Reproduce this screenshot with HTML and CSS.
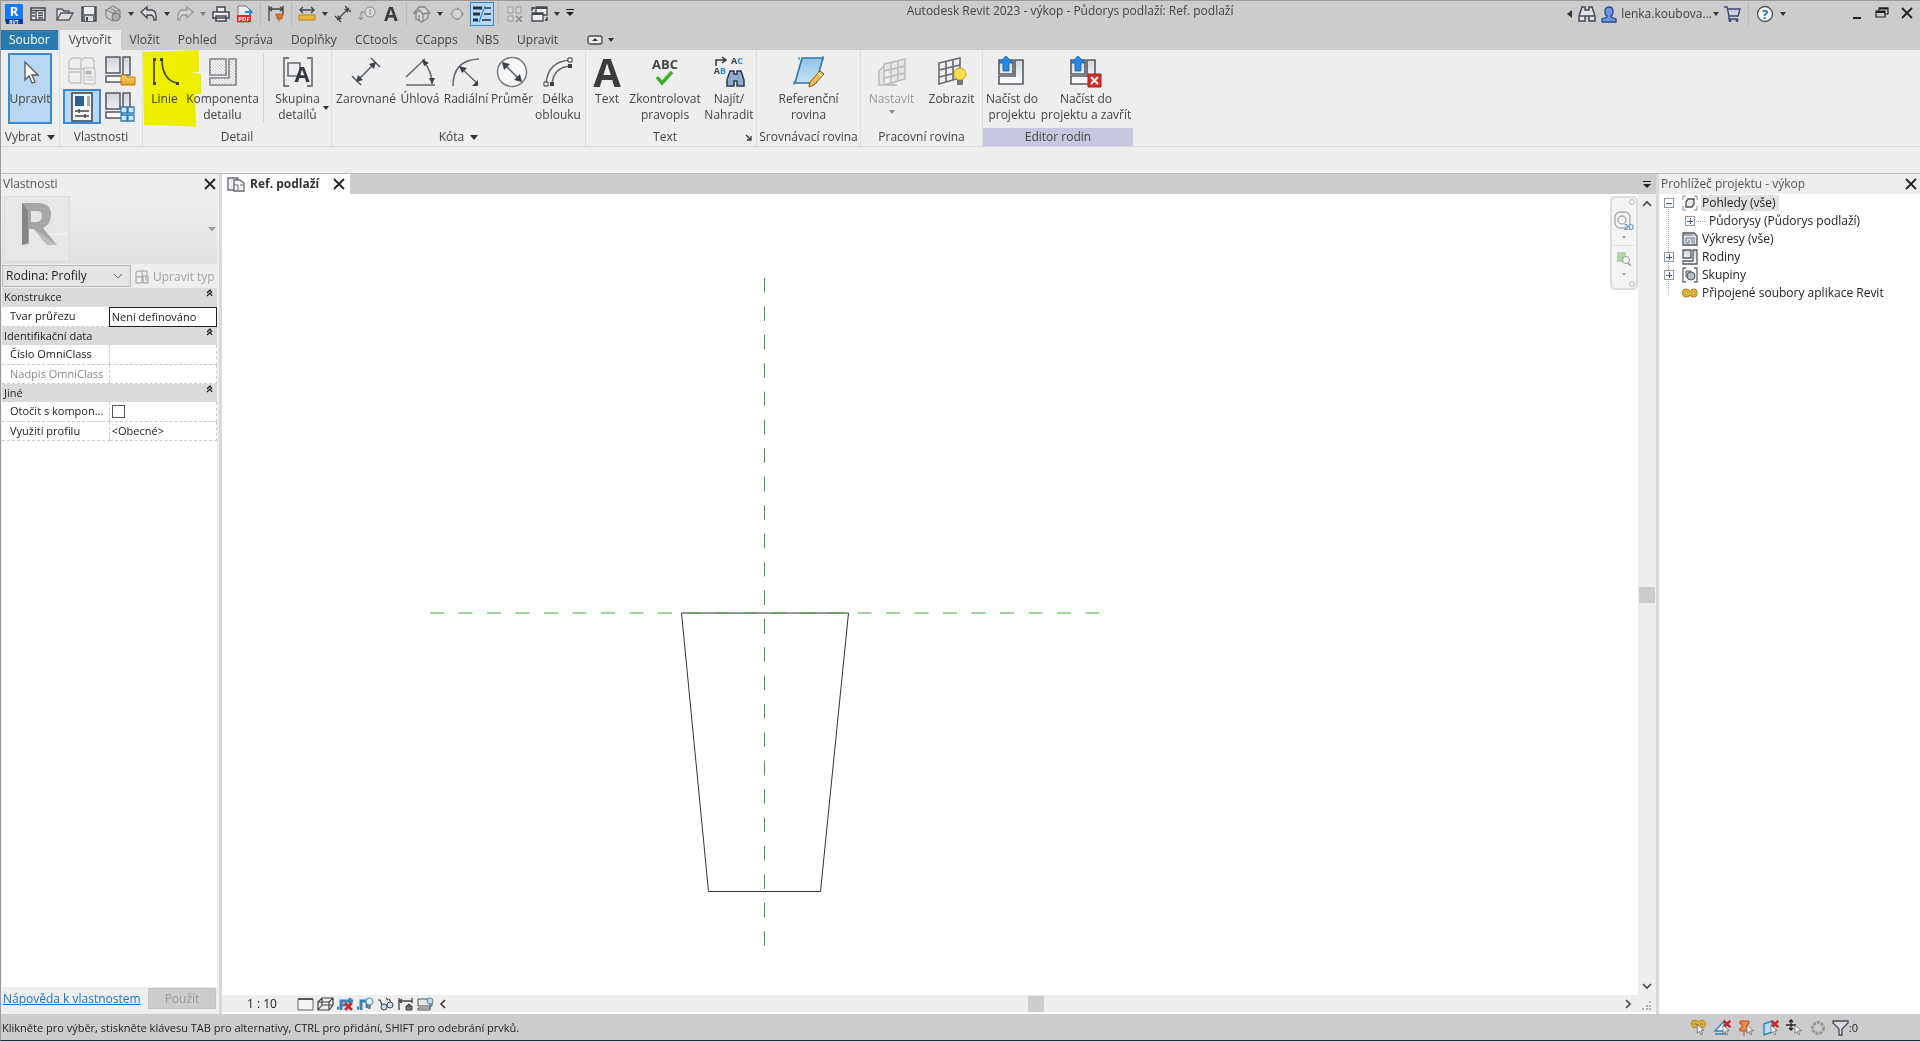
FILE: index.html
```html
<!DOCTYPE html>
<html lang="cs">
<head>
<meta charset="utf-8">
<title>Autodesk Revit 2023 - výkop - Půdorys podlaží: Ref. podlaží</title>
<link rel="stylesheet" href="styles.css">
</head>
<body>
<svg class="defs" aria-hidden="true">
  <defs>
    <linearGradient id="metal" x1="0" y1="0" x2="0" y2="1"><stop offset="0" stop-color="#d2d4d8"/><stop offset="1" stop-color="#fff"/></linearGradient>
    <linearGradient id="sky" x1="0" y1="0" x2="0" y2="1"><stop offset="0" stop-color="#8fc4e4"/><stop offset="1" stop-color="#c5e3f3"/></linearGradient>
    <linearGradient id="gold" x1="0" y1="0" x2="0" y2="1"><stop offset="0" stop-color="#fbd277"/><stop offset="1" stop-color="#e5a21d"/></linearGradient>
    <pattern id="hatch" width="3" height="3" patternUnits="userSpaceOnUse"><path d="M0 0L3 3" stroke="#bbb" stroke-width=".7"/></pattern>
    <symbol id="arrow" viewBox="0 0 16 16"><path d="M3 1v12l3-3 2 5 2-1-2-5h4z" fill="#fff" stroke="#555" stroke-width="1"/></symbol>
    <symbol id="binoc" viewBox="0 0 18 18"><path d="M4 2h3v3h4V2h3l3 9v5h-6v-5H7v5H1v-5zM2 11h5M11 11h5" fill="#dfe2e6" stroke="#444a52" stroke-width="1.5"/></symbol>
    <symbol id="family" viewBox="0 0 16 16"><path d="M1 1h8v8H1zM11 1h4v14H1v-3h10z" fill="url(#metal)" stroke="#555a62" stroke-width="1.3"/></symbol>
    <symbol id="link" viewBox="0 0 18 12"><path d="M5 3C1 3 1 9 5 9s5-6 8-6 4 6 0 6-5-6-8-6z" fill="none" stroke="#a67b13" stroke-width="4"/><path d="M5 3C1 3 1 9 5 9s5-6 8-6 4 6 0 6-5-6-8-6z" fill="none" stroke="#e5b22d" stroke-width="2.4"/></symbol>
    <symbol id="redx" viewBox="0 0 10 10"><path d="M1 1l8 8M9 1L1 9" stroke="#d02028" stroke-width="3"/></symbol>
  </defs>
</svg>

<div class="app">
  <header class="titlebar">
    <nav class="quick" aria-label="Rychlý přístup">
      <button class="qbtn" aria-label="Revit"><svg width="20" height="22" viewBox="0 0 20 22"><path d="M1 1h17l1 1v15H1z" fill="#1877f2"/><path d="M1 16h18v5H2z" fill="#0a3c9e"/><text x="10" y="13" class="logo-r">R</text><text x="10" y="21" class="logo-rvt">RVT</text></svg></button>
      <button class="qbtn" aria-label="Domů"><svg width="18" height="18" viewBox="0 0 18 18"><path d="M2 3h14v12H2z" fill="#e8e8e8" stroke="#444a52" stroke-width="1.5"/><path d="M2 5.500h14M7 5v10M9 8h5M9 10.500h5M9 13h5M3 8h3M3 11h3" stroke="#444a52" stroke-width="1.3"/></svg></button>
      <button class="qbtn open" aria-label="Otevřít"><svg width="18" height="18" viewBox="0 0 18 18"><path d="M1 15V4h5l2 2h5v3M1 15l4-7h12l-4 7z" fill="#ddd" stroke="#555b63" stroke-width="1.4"/></svg></button>
      <button class="qbtn" aria-label="Uložit"><svg width="18" height="18" viewBox="0 0 18 18"><path d="M2 2h14v14H2z" fill="#6d737b" stroke="#41474f" stroke-width="1.4"/><path d="M4 2h10v7H4z" fill="#eee"/><path d="M5 11h8v5H5z" fill="#ddd"/><path d="M6 12h2v4H6z" fill="#444"/></svg></button>
      <button class="qbtn" aria-label="Synchronizovat"><svg width="18" height="18" viewBox="0 0 18 18"><path d="M2 5l7-4 7 4v7l-7 4-7-4zM2 5l7 3 7-3M9 8v8M5 3l7 3" fill="#ccc" stroke="#888" stroke-width="1.2"/><circle cx="12" cy="12" r="4" fill="#aaa" stroke="#777"/></svg></button>
      <span class="caret"></span>
      <button class="qbtn" aria-label="Zpět"><svg width="18" height="16" viewBox="0 0 18 16"><path d="M1 6l6-5v3h4q6 0 5 10h-2q0-5-4-5H7v3z" fill="#ddd" stroke="#41474f" stroke-width="1.3"/></svg></button>
      <span class="caret"></span>
      <button class="qbtn dim" aria-label="Znovu"><svg width="18" height="16" viewBox="0 0 18 16"><path d="M17 6l-6-5v3H7q-6 0-5 10h2q0-5 4-5h3v3z" fill="#ddd" stroke="#666" stroke-width="1.3"/></svg></button>
      <span class="caret dim"></span>
      <button class="qbtn" aria-label="Tisk"><svg width="18" height="18" viewBox="0 0 18 18"><path d="M5 7V2h8v5M1 7h16v6H1zM4 11h10v5H4z" fill="#eee" stroke="#41474f" stroke-width="1.5"/></svg></button>
      <button class="qbtn" aria-label="PDF"><svg width="18" height="18" viewBox="0 0 18 18"><path d="M2 1h8l4 4v12H2z" fill="#eee" stroke="#777"/><path d="M1 10h14v7H1z" fill="#d62a1e"/><path d="M9 6h4V3l4 4-4 4V8H9z" fill="#2788d8"/><text x="8" y="16" class="pdf">PDF</text></svg></button>
      <i class="qsep"></i>
      <button class="qbtn" aria-label="Zarovnaná kóta"><svg width="18" height="18" viewBox="0 0 18 18"><path d="M2 1v15M16 1v8M2 4h14M5 2L2 4l3 2M13 2l3 2-3 2" fill="none" stroke="#41474f" stroke-width="1.3"/><path d="M9 9h7v2h-1v3h-5v-3H9zM12 14v3" fill="#e07828" stroke="#b5551c" stroke-width=".8"/></svg></button>
      <i class="qsep"></i>
      <button class="qbtn" aria-label="Měřit"><svg width="18" height="18" viewBox="0 0 18 18"><path d="M2 5h14M5 2L2 5l3 3M13 2l3 3-3 3" fill="none" stroke="#41474f" stroke-width="1.4"/><path d="M1 10h16v5H1z" fill="#edb339" stroke="#b98211"/></svg></button>
      <span class="caret"></span>
      <button class="qbtn" aria-label="Kóta"><svg width="18" height="18" viewBox="0 0 18 18"><path d="M3 15L15 3M1 11l6 6M11 1l6 6" stroke="#41474f" stroke-width="1.2"/><path d="M3 15l1-5 4 4zM15 3l-1 5-4-4z" fill="#41474f"/></svg></button>
      <button class="qbtn dim" aria-label="Popisek"><svg width="18" height="18" viewBox="0 0 18 18"><circle cx="12" cy="7" r="5" fill="#eee" stroke="#444"/><path d="M12 4v6M7 7H3v7M1 12l2 3 2-3" fill="none" stroke="#444"/></svg></button>
      <button class="qbtn" aria-label="Text"><span class="big-a small">A</span></button>
      <i class="qsep"></i>
      <button class="qbtn dim" aria-label="3D pohled"><svg width="18" height="18" viewBox="0 0 18 18"><path d="M1 8l5-6h6l5 6h-2v5l-6 4-6-3V8zM3 8l3-3 4 4v8M6 10v5M10 9l5-1" fill="#ddd" stroke="#444" stroke-width="1.3"/></svg></button>
      <span class="caret"></span>
      <button class="qbtn dim" aria-label="Řez"><svg width="18" height="18" viewBox="0 0 18 18"><path d="M8 2l7 7-7 7z" fill="#555"/><circle cx="8" cy="9" r="5" fill="#ddd" stroke="#444"/><path d="M1 9h2" stroke="#555"/></svg></button>
      <button class="qbtn on" aria-label="Tenké čáry"><svg width="20" height="18" viewBox="0 0 20 18"><path d="M1 3h9M1 9h7M1 15h5" stroke="#27303c" stroke-width="3"/><path d="M13 3h6M12 9h7M10 15h9" stroke="#27303c" stroke-width="1.5"/><path d="M13 1L7 17" stroke="#3d8fe0" stroke-width="1.3"/></svg></button>
      <i class="qsep wide"></i>
      <button class="qbtn dim" aria-label="Zavřít neaktivní"><svg width="18" height="18" viewBox="0 0 18 18"><path d="M2 2h5v6H2zM10 2h5v6h-5zM2 11h5v5H2z" fill="#ddd" stroke="#666"/><path d="M10 11l6 6M16 11l-6 6" stroke="#444" stroke-width="1.6"/></svg></button>
      <button class="qbtn" aria-label="Přepnout okna"><svg width="18" height="18" viewBox="0 0 18 18"><path d="M6 2h11v8H6z" fill="#eee" stroke="#444a52" stroke-width="1.3"/><path d="M6 3h11" stroke="#444a52" stroke-width="2"/><path d="M2 8h11v8H2z" fill="#eee" stroke="#444a52" stroke-width="1.300"/><path d="M2 9h11" stroke="#444a52" stroke-width="2"/><path d="M2 6V3h3M17 12v3h-2" fill="none" stroke="#333" stroke-width="1.300"/></svg></button>
      <span class="caret"></span>
      <button class="customize" aria-label="Přizpůsobit"><i></i></button>
    </nav>
    <h1 class="title">Autodesk Revit 2023 - výkop - Půdorys podlaží: Ref. podlaží</h1>
    <div class="account">
      <span class="caret left"></span>
      <button class="qbtn" aria-label="Hledat"><svg width="18" height="18"><use href="#binoc"/></svg></button>
      <button class="user"><svg width="16" height="17" viewBox="0 0 16 17"><path d="M8 1c6 0 4 8 2 9v1l5 2v3H1v-3l5-2v-1C4 9 2 1 8 1z" fill="#6c94e8" stroke="#2b4a8e" stroke-width="1.3"/></svg><span>lenka.koubova...</span><span class="caret"></span></button>
      <button class="qbtn" aria-label="Košík"><svg width="18" height="18" viewBox="0 0 18 18"><path d="M1 2h3l2 9h9l2-7H5M6 11v3h9" fill="#cfd3df" stroke="#3c4770" stroke-width="1.4"/><circle cx="7" cy="15.500" r="1.500" fill="#3c4770"/><circle cx="14" cy="15.500" r="1.500" fill="#3c4770"/></svg></button>
      <i class="qsep wide"></i>
      <button class="qbtn" aria-label="Nápověda"><svg width="18" height="18" viewBox="0 0 18 18"><circle cx="9" cy="9" r="7.500" fill="#f4f4f4" stroke="#4c535c" stroke-width="1.3"/><text x="9" y="14" class="qmark">?</text></svg></button>
      <span class="caret"></span>
    </div>
    <div class="window-buttons">
      <button aria-label="Minimalizovat"><svg width="12" height="14" viewBox="0 0 12 14"><path d="M2 12h8" stroke="#222" stroke-width="2"/></svg></button>
      <button aria-label="Obnovit"><svg width="14" height="14" viewBox="0 0 14 14"><path d="M4 5V2h9v6h-3M1 5h9v6H1z" fill="none" stroke="#222" stroke-width="1.2"/><path d="M4 2.500h9M1 6h9" stroke="#222" stroke-width="2"/></svg></button>
      <button aria-label="Zavřít"><svg width="12" height="12" viewBox="0 0 12 12"><path d="M1 1l10 10M11 1L1 11" stroke="#222" stroke-width="1.800"/></svg></button>
    </div>
  </header>

  <nav class="tabs">
    <button class="file">Soubor</button>
    <button class="active">Vytvořit</button>
    <button>Vložit</button><button>Pohled</button><button>Správa</button><button>Doplňky</button><button>CCtools</button><button>CCapps</button><button>NBS</button><button>Upravit</button>
    <button class="minimize" aria-label="Minimalizovat pás karet"><svg width="16" height="10" viewBox="0 0 16 10"><rect x="1" y="1" width="14" height="8" rx="2" fill="#eee" stroke="#444a52" stroke-width="1.3"/><path d="M8 3l3 3H5z" fill="#333"/></svg><span class="caret"></span></button>
  </nav>

  <section class="ribbon">
    <div class="panel p-select">
      <div class="tools"><button class="tool selected"><svg width="30" height="30" viewBox="0 0 30 30"><path d="M10 5v18l4-4 3 7 3-1-3-7h6z" fill="#fff" stroke="#555" stroke-width="1.300"/></svg><span>Upravit</span></button></div>
      <h2>Vybrat<i class="tri"></i></h2>
    </div>
    <div class="panel p-props">
      <div class="tools mini">
        <button aria-label="Vlastnosti typu" class="dim"><svg width="30" height="30" viewBox="0 0 30 30"><path d="M2 5l3-3h8l2 2 2-2h8l2 3v8H2zM2 16h12v11H4l-2-2zM14 3v24" fill="#eee" stroke="#999" stroke-width="1.400"/><path d="M17 12h11v16H17z" fill="#eee" stroke="#888"/><path d="M19 15h5v3h-5zM19 21h7M19 24h7" fill="#888" stroke="#888"/></svg></button>
        <button aria-label="Kategorie a parametry rodiny"><svg width="32" height="32" viewBox="0 0 32 32"><path d="M2 2h14v16H2zM19 2h7v18h-7zM2 21h16v6H2z" fill="url(#metal)" stroke="#555a62" stroke-width="1.500"/><path d="M17 20h5l1 2h8v8H17z" fill="url(#gold)" stroke="#b97c0b"/></svg></button>
        <button aria-label="Vlastnosti" class="selected"><svg width="24" height="32" viewBox="0 0 24 32"><rect x="2" y="2" width="20" height="28" fill="#f4f4f4" stroke="#444a52" stroke-width="1.600"/><path d="M5 5h9v10H5z" fill="#2d5f93"/><path d="M17 5h3v10h-3z" fill="#aaa"/><path d="M5 20h14M5 25h14M9 18v4M15 23v4" stroke="#444a52" stroke-width="1.500"/></svg></button>
        <button aria-label="Typy rodiny"><svg width="32" height="32" viewBox="0 0 32 32"><path d="M2 2h14v16H2zM19 2h7v18h-7zM2 21h16v6H2z" fill="url(#metal)" stroke="#555a62" stroke-width="1.500"/><path d="M17 16h6v6h-6zM24 16h6v6h-6zM17 24h6v6h-6zM24 24h6v6h-6z" fill="#cfe6f8" stroke="#2c7dba" stroke-width="1.300"/></svg></button>
      </div>
      <h2>Vlastnosti</h2>
    </div>
    <div class="panel p-detail">
      <div class="tools">
        <button class="tool w40"><svg width="30" height="30" viewBox="0 0 30 30"><path d="M4 3v24M12 3c0 10 4 22 16 23" fill="none" stroke="#3d4100" stroke-width="1.600"/><path d="M3 1h3v3H3zM3 25h3v3H3zM10 1h3v3h-3zM26 25h3v3h-3z" fill="#3d4100"/></svg><span>Linie</span></button>
        <button class="tool w76"><svg width="30" height="30" viewBox="0 0 30 30"><path d="M2 2h16v16H2zM21 2h7v26H2v-7h19z" fill="#f4f4f4" stroke="#777b80" stroke-width="1.600"/><path d="M2 2h16v16H2zM21 2h7v26H2v-7h19z" fill="url(#hatch)"/></svg><span>Komponenta<br>detailu</span></button>
        <i class="divider"></i>
        <button class="tool w64 menu"><svg width="32" height="30" viewBox="0 0 32 30"><path d="M7 1H2v28h5M25 1h5v28h-5" fill="none" stroke="#777b80" stroke-width="1.800"/><path d="M6 6h12v13H6z" fill="none" stroke="#666a70" stroke-width="1.600"/><text x="20" y="25" class="glyph-a">A</text></svg><span>Skupina<br>detailů</span><i class="caret"></i></button>
        <svg class="marker" width="58" height="78" viewBox="0 0 58 78" aria-hidden="true"><path d="M0 2L56 0V22H48L58 24V44H52L53 77L40 76L1 75z" fill="#ff0"/></svg>
      </div>
      <h2>Detail</h2>
    </div>
    <div class="panel p-dim">
      <div class="tools">
        <button class="tool w64"><svg width="30" height="30" viewBox="0 0 30 30"><path d="M6 24L24 6M1 19l9 9M20 1l9 9" stroke="#555b63" stroke-width="1.500"/><path d="M5 25l2-7 5 5zM25 5l-2 7-5-5z" fill="#3c424a"/></svg><span>Zarovnané</span></button>
        <button class="tool w44"><svg width="30" height="30" viewBox="0 0 30 30"><path d="M1 28h29M1 20L20 2M18 4q9 10 9 23" fill="none" stroke="#666a70" stroke-width="1.600"/><path d="M17 2l7 4-5 3zM24 21h6l-3 6z" fill="#3c424a"/></svg><span>Úhlová</span></button>
        <button class="tool w48"><svg width="30" height="30" viewBox="0 0 30 30"><path d="M2 29Q2 3 28 2M9 10l18 17" fill="none" stroke="#666a70" stroke-width="1.600"/><path d="M8 9l8 2-5 5zM27 23v6h-6z" fill="#3c424a"/></svg><span>Radiální</span></button>
        <button class="tool w44"><svg width="32" height="32" viewBox="0 0 32 32"><circle cx="16" cy="16" r="14.500" fill="#f7f7f7" stroke="#777b80" stroke-width="1.500"/><path d="M7 7l18 18" stroke="#555b63" stroke-width="1.500"/><path d="M6 6l8 2-6 6zM26 26l-2-8-6 6z" fill="#3c424a"/></svg><span>Průměr</span></button>
        <button class="tool w48"><svg width="30" height="30" viewBox="0 0 30 30"><path d="M3 28Q4 4 28 3M9 28Q10 10 28 9" fill="none" stroke="#666a70" stroke-width="1.600"/><path d="M1 25h4v4H1zM25 1h4v4h-4z" fill="#fff" stroke="#333"/><path d="M7 25h4v4H7zM25 7h4v4h-4z" fill="#3c424a"/></svg><span>Délka<br>oblouku</span></button>
      </div>
      <h2>Kóta<i class="tri"></i></h2>
    </div>
    <div class="panel p-text">
      <div class="tools">
        <button class="tool w40"><span class="big-a">A</span><span>Text</span></button>
        <button class="tool w76"><svg width="30" height="30" viewBox="0 0 30 30"><text x="15" y="12" class="abc">ABC</text><path d="M7 20l5 6 10-11" fill="none" stroke="#43b02a" stroke-width="3.500"/></svg><span>Zkontrolovat<br>pravopis</span></button>
        <button class="tool w52"><svg width="32" height="32" viewBox="0 0 32 32"><path d="M3 10V4h10M9 1l4 3-4 3" fill="none" stroke="#333" stroke-width="1.500"/><text x="24" y="8" class="tiny">A<tspan fill="#2e8be6">C</tspan></text><text x="7" y="18" class="tiny">A<tspan fill="#2e8be6">B</tspan></text><path d="M17 15h4v3h3v-3h4l3 9v6h-7v-5h-3v5h-7v-6z" fill="#8fabd0" stroke="#28374e" stroke-width="1.500"/></svg><span>Najít/<br>Nahradit</span></button>
      </div>
      <h2>Text<svg class="launcher" width="7" height="7" viewBox="0 0 7 7"><path d="M1 1l4 4M6 2v4H2" fill="none" stroke="#333" stroke-width="1.300"/></svg></h2>
    </div>
    <div class="panel p-ref">
      <div class="tools"><button class="tool w64"><svg width="32" height="32" viewBox="0 0 32 32"><path d="M9 2h21l-7 25H2z" fill="url(#sky)" stroke="#2e78ac" stroke-width="1.600"/><path d="M6 1v3M30 0v4M1 25v4" stroke="#2e78ac"/><path d="M27 15l4 3-10 11-5 2 1-5z" fill="#f0bd53" stroke="#7e5920"/><path d="M25 17l4 3" stroke="#fff"/></svg><span>Referenční<br>rovina</span></button></div>
      <h2>Srovnávací rovina</h2>
    </div>
    <div class="panel p-work">
      <div class="tools">
        <button class="tool w60 dim" disabled><svg width="30" height="30" viewBox="0 0 30 30"><path d="M7 7l21-5v20L7 28zM7 14l21-5M7 21l21-5M14 5v21M21 4v20M7 9L2 14v14h18" fill="#ddd" stroke="#888" stroke-width="1.400"/></svg><span>Nastavit</span><i class="caret"></i></button>
        <button class="tool w60"><svg width="30" height="32" viewBox="0 0 30 32"><path d="M2 7l21-5v20L2 28zM2 14l21-5M2 21l21-5M9 5v21M16 4v20" fill="#eee" stroke="#666a70" stroke-width="1.600"/><circle cx="23" cy="18" r="6" fill="#ffe04a" stroke="#c79b18"/><path d="M20 24h6v5h-6z" fill="#777"/></svg><span>Zobrazit</span></button>
      </div>
      <h2>Pracovní rovina</h2>
    </div>
    <div class="panel p-editor">
      <div class="tools">
        <button class="tool w56"><svg width="30" height="32" viewBox="0 0 30 32"><path d="M2 4h14v14H2zM18 4h8v24H2v-8h16z" fill="url(#metal)" stroke="#555a62" stroke-width="1.600"/><path d="M9 0l7 7h-4v8H6V7H2z" fill="#2588e8" stroke="#145fa8" stroke-width=".8"/></svg><span>Načíst do<br>projektu</span></button>
        <button class="tool w92"><svg width="34" height="32" viewBox="0 0 34 32"><path d="M2 4h14v14H2zM18 4h8v24H2v-8h16z" fill="url(#metal)" stroke="#555a62" stroke-width="1.600"/><path d="M9 0l7 7h-4v8H6V7H2z" fill="#2588e8" stroke="#145fa8" stroke-width=".8"/><path d="M19 18h13v13H19z" fill="#d32f2f" stroke="#a51e1e"/><path d="M22 21l7 7M29 21l-7 7" stroke="#fff" stroke-width="1.800"/></svg><span>Načíst do<br>projektu a zavřít</span></button>
      </div>
      <h2>Editor rodin</h2>
    </div>
  </section>
  <div class="options-bar"></div>

  <main class="workspace">
    <aside class="properties">
      <div class="dock-head"><h2>Vlastnosti</h2><button aria-label="Zavřít vlastnosti"><svg width="12" height="12" viewBox="0 0 12 12"><path d="M1 1l10 10M11 1L1 11" stroke="#222" stroke-width="1.800"/></svg></button></div>
      <div class="type-selector">
        <svg width="66" height="66" viewBox="0 0 66 66"><rect x=".5" y=".5" width="65" height="65" fill="#e7e7e7" stroke="#dcdcdc"/><path d="M3 39h59v-3l-20 3z" fill="#efefef"/><path d="M18 7h17q13 1 12 13-1 9-8 12l14 17H43L30 33h-5v15l-7 1z" fill="#a5a5a5"/><path d="M18 7l6 8v31l-6 3z" fill="#858585"/><path d="M27 15h6q5 0 5 5t-5 6h-6z" fill="#e4e4e4"/><path d="M30 33l23 16H43z" fill="#bcbcbc"/></svg>
        <i class="caret"></i>
      </div>
      <div class="filter-row">
        <span class="combo"><select aria-label="Filtr vlastností"><option>Rodina: Profily</option></select><svg width="10" height="6" viewBox="0 0 10 6"><path d="M1 1l4 4 4-4" fill="none" stroke="#666"/></svg></span>
        <button class="edit-type" disabled><svg width="14" height="14" viewBox="0 0 14 14"><path d="M1 2l2-1h4v12H1zM7 1h5v4M1 7h6M8 6h5v7H8zM10 8h2M10 10h2" fill="none" stroke="#999"/></svg>Upravit typ</button>
      </div>
      <div class="grid-area">
      <table class="props">
        <tbody>
          <tr class="group"><th colspan="2"><button>Konstrukce<svg width="7" height="8" viewBox="0 0 7 8"><path d="M1 4l3-3 2 3M1 7l3-3 2 3" fill="none" stroke="#222" stroke-width="1.300"/></svg></button></th></tr>
          <tr><th><label for="shape">Tvar průřezu</label></th><td class="focus"><input id="shape" value="Není definováno"></td></tr>
          <tr class="group"><th colspan="2"><button>Identifikační data<svg width="7" height="8" viewBox="0 0 7 8"><path d="M1 4l3-3 2 3M1 7l3-3 2 3" fill="none" stroke="#222" stroke-width="1.300"/></svg></button></th></tr>
          <tr><th><label for="omni">Číslo OmniClass</label></th><td><input id="omni"></td></tr>
          <tr class="off"><th><label for="omni-title">Nadpis OmniClass</label></th><td><input id="omni-title" disabled></td></tr>
          <tr class="group"><th colspan="2"><button>Jiné<svg width="7" height="8" viewBox="0 0 7 8"><path d="M1 4l3-3 2 3M1 7l3-3 2 3" fill="none" stroke="#222" stroke-width="1.300"/></svg></button></th></tr>
          <tr><th><label for="rotate">Otočit s kompon...</label></th><td><input type="checkbox" id="rotate"></td></tr>
          <tr><th><label for="usage">Využití profilu</label></th><td><input id="usage" value="&lt;Obecné&gt;"></td></tr>
        </tbody>
      </table>
      </div>
      <div class="props-foot"><a href="#help">Nápověda k vlastnostem</a><button disabled>Použít</button></div>
    </aside>

    <section class="view">
      <div class="view-tabs">
        <div class="view-tab"><svg width="18" height="15" viewBox="0 0 18 15"><path d="M1 1h10v12H1z" fill="#eee" stroke="#666a70" stroke-width="1.300"/><path d="M7 3h6l4 3v8H7z" fill="#f4f4f4" stroke="#666a70" stroke-width="1.300"/><path d="M7 8h4M13 8h3M11 8v5" stroke="#666a70"/></svg><span>Ref. podlaží</span><button aria-label="Zavřít pohled"><svg width="12" height="12" viewBox="0 0 12 12"><path d="M1 1l10 10M11 1L1 11" stroke="#222" stroke-width="1.800"/></svg></button></div>
        <button class="customize" aria-label="Seznam pohledů"><i></i></button>
      </div>
      <div class="canvas-row">
        <div class="canvas">
          <svg class="drawing" aria-label="Profil výkopu">
            <path d="M459.500 419H626.500L598.500 697.500H486.500z" fill="none" stroke="#333"/>
            <path d="M208 419H879" stroke="#3fa83f" stroke-dasharray="14 14.500"/>
            <path d="M542.500 84V754" stroke="#35a035" stroke-dasharray="14.500 13.900"/>
          </svg>
          <div class="navbar">
            <i class="dot"></i>
            <svg width="20" height="20" viewBox="0 0 20 20"><rect x="1" y="1" width="15" height="16" rx="5" fill="#f4f4f4" stroke="#aaa" stroke-width="1.300"/><circle cx="8" cy="9" r="4" fill="none" stroke="#aaa" stroke-width="1.300"/><text x="15" y="19" class="two-d">2D</text></svg>
            <i class="caret"></i>
            <i class="rule"></i>
            <svg width="16" height="16" viewBox="0 0 16 16"><path d="M1 1h9v10H1z" fill="#b3d4a5"/><circle cx="10" cy="9" r="3.500" fill="#f4f4f4" stroke="#999"/><path d="M12 12l3 3" stroke="#999" stroke-width="1.500"/></svg>
            <i class="caret"></i>
            <i class="dot end"></i>
          </div>
        </div>
        <div class="vscroll"><svg width="10" height="6" viewBox="0 0 10 6"><path d="M1 5l4-4 4 4" fill="none" stroke="#444" stroke-width="1.600"/></svg><i class="thumb"></i><svg width="10" height="6" viewBox="0 0 10 6"><path d="M1 1l4 4 4-4" fill="none" stroke="#444" stroke-width="1.600"/></svg></div>
      </div>
      <div class="view-bar">
        <button class="scale">1 : 10</button>
        <div class="view-icons">
          <button aria-label="Úroveň detailu"><svg width="17" height="14" viewBox="0 0 17 14"><path d="M1 2h15v11H1z" fill="#f4f4f8" stroke="#666"/><path d="M1 2h15" stroke="#555" stroke-width="2"/></svg></button>
          <button aria-label="Vizuální styl"><svg width="17" height="14" viewBox="0 0 17 14"><path d="M1 5l4-4h11v7l-4 5H1zM1 5h11v8M12 5l4-4M5 1v7h11M5 8l-4 5" fill="none" stroke="#444" stroke-width="1.200"/></svg></button>
          <button aria-label="Oříznout pohled"><svg width="17" height="14" viewBox="0 0 17 14"><path d="M0 11h2M4 13V4h9v3M13 1v3h3M4 8h5" fill="none" stroke="#3980b8" stroke-width="3"/><path d="M8 6l7 7M15 6l-7 7" stroke="#c92828" stroke-width="2.500"/></svg></button>
          <button aria-label="Zobrazit oblast oříznutí"><svg width="17" height="14" viewBox="0 0 17 14"><path d="M0 11h2M4 13V4h6v7" fill="none" stroke="#3980b8" stroke-width="3"/><circle cx="12.500" cy="4.500" r="3.500" fill="#ddefff" stroke="#58a"/><path d="M12.500 8v4" stroke="#777" stroke-width="2.500"/></svg></button>
          <button aria-label="Dočasně skrýt"><svg width="17" height="14" viewBox="0 0 17 14"><path d="M1 3h2l3 7M9 1l2 2M12 2l3 5" fill="none" stroke="#444" stroke-width="1.200"/><ellipse cx="7" cy="10" rx="3" ry="3" fill="#cde" stroke="#444"/><ellipse cx="13" cy="8" rx="3" ry="3" fill="#cde" stroke="#444"/></svg></button>
          <button aria-label="Odkrýt vazby"><svg width="17" height="14" viewBox="0 0 17 14"><path d="M2 1v12M15 1v5M2 4h13M5 2L2 4l3 2" fill="none" stroke="#444" stroke-width="1.300"/><path d="M9 9h6v4H9zM10 9q2-4 4 0" fill="#777" stroke="#444"/></svg></button>
          <button aria-label="Náhled"><svg width="17" height="14" viewBox="0 0 17 14"><path d="M1 2h14v7H1zM1 11h12v2H1z" fill="#e5e5e5" stroke="#555"/><circle cx="13" cy="4" r="3" fill="#bcdcff" stroke="#58a"/><path d="M13 7v6" stroke="#68a" stroke-width="2"/></svg></button>
          <svg class="more" width="6" height="10" viewBox="0 0 6 10"><path d="M5 1L1 5l4 4" fill="none" stroke="#333" stroke-width="1.500"/></svg>
        </div>
        <div class="hscroll"><i class="thumb"></i><svg width="6" height="10" viewBox="0 0 6 10"><path d="M1 1l4 4-4 4" fill="none" stroke="#444" stroke-width="1.600"/></svg></div>
        <svg class="grip" width="10" height="10" viewBox="0 0 10 10"><path d="M7 0h2v2H7zM4 4h2v2H4zM7 4h2v2H7zM0 7h2v2H0zM4 7h2v2H4zM7 7h2v2H7z" fill="#b5b5b5"/></svg>
      </div>
    </section>

    <aside class="browser">
      <div class="dock-head"><h2>Prohlížeč projektu - výkop</h2><button aria-label="Zavřít prohlížeč"><svg width="12" height="12" viewBox="0 0 12 12"><path d="M1 1l10 10M11 1L1 11" stroke="#222" stroke-width="1.800"/></svg></button></div>
      <ul class="tree">
        <li><button class="exp minus" aria-label="Sbalit"></button><svg width="16" height="16" viewBox="0 0 16 16"><path d="M4 1H1v4M12 1h3v4M4 15H1v-4M12 15h3v-4" fill="none" stroke="#888"/><path d="M4 7l2-3h6v5l-2 3H4z" fill="#e7ebf0" stroke="#555" stroke-width="1.400"/></svg><span class="sel">Pohledy (vše)</span></li>
        <li class="child"><button class="exp" aria-label="Rozbalit"></button><i class="dots"></i><span>Půdorysy (Půdorys podlaží)</span></li>
        <li class="leaf"><svg width="16" height="14" viewBox="0 0 16 14"><path d="M1 1h11l3 3v9H1z" fill="#dde2e8" stroke="#555" stroke-width="1.300"/><path d="M1 3h10M4 6h6v5M4 6v5h3V8M12 5v7" fill="none" stroke="#6b7a8c"/></svg><span>Výkresy (vše)</span></li>
        <li><button class="exp" aria-label="Rozbalit"></button><svg width="16" height="16"><use href="#family"/></svg><span>Rodiny</span></li>
        <li><button class="exp" aria-label="Rozbalit"></button><svg width="16" height="16" viewBox="0 0 16 16"><path d="M4 1H1v14h3M12 1h3v14h-3" fill="none" stroke="#666" stroke-width="1.300"/><path d="M4 4h5v6H4z" fill="#ccd" stroke="#555"/><circle cx="9" cy="9" r="4" fill="#b5bfcc" stroke="#555"/></svg><span>Skupiny</span></li>
        <li class="leaf"><svg width="16" height="12"><use href="#link"/></svg><span>Připojené soubory aplikace Revit</span></li>
      </ul>
    </aside>
  </main>

  <footer class="status">
    <p>Klikněte pro výběr, stiskněte klávesu TAB pro alternativy, CTRL pro přidání, SHIFT pro odebrání prvků.</p>
    <div class="status-icons">
      <button aria-label="Vybrat vazby"><svg width="18" height="18" viewBox="0 0 18 18"><use href="#link" width="17" height="10"/><use href="#arrow" x="5" y="4" width="12" height="13"/></svg></button>
      <button aria-label="Vybrat podložené"><svg width="18" height="18" viewBox="0 0 18 18"><path d="M1 12l9-10v10zM1 15h12" fill="#eef6ff" stroke="#3980b8" stroke-width="1.400"/><use href="#redx" x="9" y="1" width="8" height="8"/><use href="#arrow" x="7" y="5" width="11" height="12"/></svg></button>
      <button aria-label="Vybrat připnuté"><svg width="18" height="18" viewBox="0 0 18 18"><path d="M2 2h9v3H9v4h2v3H2V9h2V5H2zM6 12v5" fill="#f08a4b" stroke="#b84a18"/><use href="#arrow" x="7" y="5" width="11" height="12"/></svg></button>
      <button aria-label="Vybrat podle plochy"><svg width="18" height="18" viewBox="0 0 18 18"><path d="M2 5l8-3v11l-8 3z" fill="#b8dcf0" stroke="#3980b8" stroke-width="1.400"/><use href="#redx" x="9" y="1" width="8" height="8"/><use href="#arrow" x="7" y="5" width="11" height="12"/></svg></button>
      <button aria-label="Přetáhnout prvky"><svg width="18" height="18" viewBox="0 0 18 18"><path d="M5 1v10M0 6h10M3 3l2-2 2 2M3 9l2 2 2-2" fill="none" stroke="#222" stroke-width="1.300"/><use href="#arrow" x="7" y="5" width="11" height="12"/></svg></button>
      <button aria-label="Procesy"><svg width="16" height="16" viewBox="0 0 16 16"><circle cx="8" cy="8" r="5.500" fill="none" stroke="#999" stroke-width="3" stroke-dasharray="3 1"/></svg></button>
      <button class="filter"><svg width="17" height="16" viewBox="0 0 17 16"><path d="M1 1h15v2l-6 6v6H7V9L1 3z" fill="#d8dce2" stroke="#444a52" stroke-width="1.300"/></svg>:0</button>
    </div>
  </footer>
</div>
</body>
</html>
```
FILE: styles.css
```css
* { box-sizing: border-box; }
body { margin: 0; font-family: "Open Sans", "Noto Sans", sans-serif; font-size: 12px; line-height: 16px; color: #222; background: #eee; }
button, input, select { font: inherit; color: inherit; border: 0; background: none; padding: 0; margin: 0; }
h1, h2, p, ul { margin: 0; padding: 0; font-size: inherit; font-weight: normal; list-style: none; }
svg { flex: none; display: block; overflow: visible; }
.defs { position: absolute; width: 0; height: 0; overflow: hidden; }
.app { min-height: 100vh; display: flex; flex-direction: column; border-top: 1px solid #999; border-left: 1px solid #999; border-bottom: 1px solid #1d2b38; }
.dim { opacity: .5; }
.caret { flex: none; width: 12px; display: flex; justify-content: center; }
.caret::before { content: ""; border: 3px solid transparent; border-top: 4px solid #333; border-bottom: 0; }
.caret.left::before { border: 4px solid transparent; border-right: 5px solid #333; border-left: 0; }

/* Title bar */
.titlebar { height: 29px; display: flex; align-items: center; background: #ccc; padding: 0 7px 6px 1px; }
.quick, .account, .window-buttons { display: flex; align-items: center; height: 24px; }
.quick, .account { padding-top: 3px; }
.qbtn { width: 24px; height: 24px; flex: none; display: flex; align-items: center; justify-content: center; }
.qbtn.open { margin-left: 3px; }
.qbtn.on { background: #b4d8f6; border: 1px solid #3286d2; }
.qsep { width: 1px; height: 24px; margin: 0 3px; background: #bbb; }
.qsep.wide { margin: 0 4px; }
.logo-r { font: bold 13px "Open Sans", sans-serif; fill: #fff; text-anchor: middle; }
.logo-rvt { font: bold 5px "Open Sans", sans-serif; fill: #fff; text-anchor: middle; }
.pdf { font: bold 6px "Open Sans", sans-serif; fill: #fff; text-anchor: middle; }
.abc { font: bold 13px "Open Sans", sans-serif; fill: #444; text-anchor: middle; }
.tiny { font: bold 9px "Open Sans", sans-serif; fill: #444; text-anchor: middle; }
.glyph-a { font: bold 22px "Open Sans", sans-serif; fill: #333a42; text-anchor: middle; }
.big-a { font: bold 40px/30px "Open Sans", sans-serif; color: #3c3c3c; height: 30px; }
.big-a.small { font-size: 20px; line-height: 20px; height: 20px; }
.customize { width: 14px; display: flex; align-items: center; justify-content: center; }
.customize i { border: 4px solid transparent; border-top: 4px solid #222; border-bottom: 0; position: relative; }
.customize i::before { content: ""; position: absolute; left: -4px; top: -7px; width: 8px; height: 1px; background: #222; }
.title { flex: 1; text-align: center; color: #444; white-space: nowrap; padding-bottom: 3px; }
.user { display: flex; align-items: center; gap: 4px; color: #444; margin-left: 2px; }
.user .caret { width: 8px; margin-left: -4px; }
.qmark { font: bold 13px "Open Sans", sans-serif; fill: #2467c8; text-anchor: middle; }
.window-buttons { gap: 12px; margin-left: 62px; }

/* Ribbon tabs */
.tabs { height: 20px; display: flex; background: #ccc; color: #444; }
.tabs button { padding: 0 9px; }
.tabs .file { background: #2a7ab0; color: #fff; padding: 0 8px; margin-right: 2px; }
.tabs .active { background: #eee; }
.tabs .minimize { display: flex; align-items: center; gap: 2px; padding: 0 20px; }

/* Ribbon */
.ribbon { display: flex; height: 97px; border-bottom: 1px solid #d8d8d8; background: #eee; color: #444; }
.panel { flex: none; display: flex; flex-direction: column; border-right: 1px solid #ddd; }
.p-select { width: 59px; }
.p-props { width: 83px; }
.p-detail { width: 189px; }
.p-dim { width: 254px; }
.p-text { width: 171px; }
.p-ref { width: 104px; }
.p-work { width: 122px; }
.p-editor { width: 150px; border: 0; }
.panel h2 { height: 18px; display: flex; align-items: center; justify-content: center; position: relative; white-space: nowrap; }
.p-text h2 { padding-right: 12px; }
.p-editor h2 { background: #c7c7e2; }
.tri { margin-left: 6px; border: 4px solid transparent; border-top: 5px solid #333; border-bottom: 0; }
.launcher { position: absolute; right: 4px; top: 6px; }
.tools { flex: 1; display: flex; justify-content: center; padding-top: 3px; position: relative; }
.p-dim .tools { justify-content: flex-start; padding-left: 2px; }
.tool { display: flex; flex-direction: column; align-items: center; gap: 3px; height: 71px; padding-top: 3px; white-space: nowrap; flex: none; position: relative; }
.tool > svg { height: 32px; }
.tool > .big-a { height: 32px; line-height: 32px; }
.selected { background: #b9d7f2; border: 2px solid #3b8ad0; }
.tool.selected { width: 44px; padding-top: 1px; }
.w40 { width: 40px; } .w44 { width: 44px; } .w48 { width: 48px; } .w52 { width: 52px; } .w56 { width: 56px; }
.w60 { width: 60px; } .w64 { width: 64px; } .w76 { width: 76px; } .w92 { width: 92px; }
.divider { width: 1px; height: 70px; background: #d0d0d0; margin: 0 2px; }
.menu .caret { position: absolute; right: -2px; bottom: 14px; }
.mini { display: grid; grid-template-columns: 38px 38px; grid-template-rows: 36px 35px; justify-content: center; }
.mini button { display: flex; align-items: center; justify-content: center; }
.marker { position: absolute; left: 0; top: 0; mix-blend-mode: multiply; }
.options-bar { height: 27px; border-bottom: 1px solid #bbb; }

/* Workspace */
.workspace { flex: 1; display: grid; grid-template-columns: 218px 1fr 261px; gap: 3px; background: #d9d9d9; }
.dock-head { height: 20px; display: flex; align-items: center; justify-content: space-between; background: #eee; color: #555; padding: 0 3px 0 2px; }
.properties { display: flex; flex-direction: column; background: #eee; }
.type-selector { height: 70px; display: flex; align-items: center; justify-content: space-between; padding: 0 1px 0 3px; margin-right: 2px; background: linear-gradient(#eee, #e2e2e2); }
.type-selector .caret { width: 8px; }
.type-selector .caret::before { border-width: 4px 4px 0; border-top-color: #999; }
.filter-row { display: flex; height: 24px; gap: 4px; padding: 1px 2px 0 1px; }
.combo { position: relative; width: 129px; }
.combo select { appearance: none; width: 100%; height: 22px; padding: 0 3px; background: #e3e3e3; border: 1px solid #bbb; }
.combo svg { position: absolute; right: 8px; top: 8px; }
.edit-type { display: flex; align-items: center; gap: 4px; color: #a5a5a5; white-space: nowrap; }
.grid-area { flex: 1; background: #fff; margin: 0 2px 0 1px; font-size: 11px; }
.props { width: 100%; table-layout: fixed; border-collapse: collapse; }
.props tr { height: 19px; }
.props th, .props td { padding: 0; font-weight: normal; text-align: left; height: 19px; line-height: 16px; border-bottom: 1px dashed #ccc; white-space: nowrap; overflow: hidden; }
.props th { padding-left: 8px; }
.props td { border-left: 1px dashed #ccc; border-right: 1px dashed #ccc; }
.props .group th { padding: 0; background: #dadada; border: 0; }
.group button { width: 100%; display: flex; justify-content: space-between; padding: 0 4px 0 2px; }
.props .focus { border: 1px solid #222; }
.props input { display: block; width: 100%; height: 17px; padding: 0 2px; }
.props input[type="checkbox"] { appearance: none; width: 13px; height: 13px; margin-left: 2px; border: 1px solid #555; background: #fff; }
.off { color: #888; }
.props-foot { display: flex; justify-content: space-between; align-items: center; height: 27px; padding: 0 3px 4px 2px; white-space: nowrap; }
.props-foot a { color: #1573cf; }
.props-foot button { width: 68px; height: 21px; background: #ccc; border: 1px solid #c2c2c2; color: #999; }

.view { display: flex; flex-direction: column; background: #fff; min-width: 0; }
.view-tabs { height: 20px; display: flex; justify-content: space-between; background: #ccc; }
.view-tab { width: 128px; display: flex; align-items: center; gap: 5px; background: #fff; padding: 0 5px; font-weight: bold; color: #333; white-space: nowrap; }
.view-tab button { margin-left: auto; }
.view-tabs .customize { padding-top: 4px; width: 18px; }
.canvas-row { flex: 1; display: flex; }
.canvas { flex: 1; position: relative; }
.drawing { position: absolute; left: 0; top: 0; width: 100%; height: 100%; }
.navbar { position: absolute; right: 0; top: 2px; width: 28px; height: 94px; border: 2px solid #ddd; border-radius: 5px; background: #f4f4f4; display: flex; flex-direction: column; align-items: center; justify-content: space-between; padding: 1px; }
.navbar .dot { width: 6px; height: 6px; border: 1px solid #bbb; border-radius: 50%; align-self: flex-end; }
.navbar .caret::before { border-width: 3px 2px 0; border-top-color: #aaa; }
.navbar .rule { width: 20px; height: 1px; background: #ddd; }
.two-d { font: bold 8px "Open Sans", sans-serif; fill: #6e9fcd; text-anchor: middle; }
.vscroll { width: 18px; background: #eee; display: flex; flex-direction: column; align-items: center; justify-content: space-between; padding: 7px 0 6px; }
.thumb { width: 16px; height: 16px; background: #ccc; }
.view-bar { height: 19px; display: flex; align-items: center; background: #eee; border-bottom: 2px solid #fafafa; }
.scale { padding: 0 20px 0 25px; white-space: nowrap; }
.view-icons { display: flex; align-items: center; gap: 3px; }
.more { margin-left: 3px; }
.hscroll { flex: 1; display: flex; align-items: center; justify-content: space-between; padding: 0 2px 0 582px; }
.grip { margin: 4px 4px 0 9px; }

.browser { background: #fff; }
.tree { padding-left: 5px; position: relative; }
.tree::before { content: ""; position: absolute; left: 9px; top: 12px; height: 88px; border-left: 1px dotted #aaa; }
.tree li { height: 18px; display: flex; align-items: center; gap: 8px; position: relative; white-space: nowrap; }
.tree span { margin-left: -5px; padding: 0 1px; }
.tree .sel { background: #e0e0e0; padding: 0 3px 0 1px; }
.tree .child { padding-left: 21px; }
.tree .leaf { padding-left: 18px; }
.tree .dots { width: 9px; margin-left: -7px; border-top: 1px dotted #aaa; }
.exp { width: 10px; height: 10px; border: 1px solid #999; background: linear-gradient(#3b5fa5, #3b5fa5) center / 6px 1px no-repeat, linear-gradient(#3b5fa5, #3b5fa5) center / 1px 6px no-repeat, #fff; }
.exp.minus { background: linear-gradient(#3b5fa5, #3b5fa5) center / 6px 1px no-repeat, #fff; }

/* Status bar */
.status { height: 26px; display: flex; align-items: center; justify-content: space-between; background: #ccc; padding: 2px 62px 0 1px; font-size: 11px; }
.status-icons { display: flex; align-items: center; gap: 6px; }
.filter { display: flex; align-items: center; }
```
